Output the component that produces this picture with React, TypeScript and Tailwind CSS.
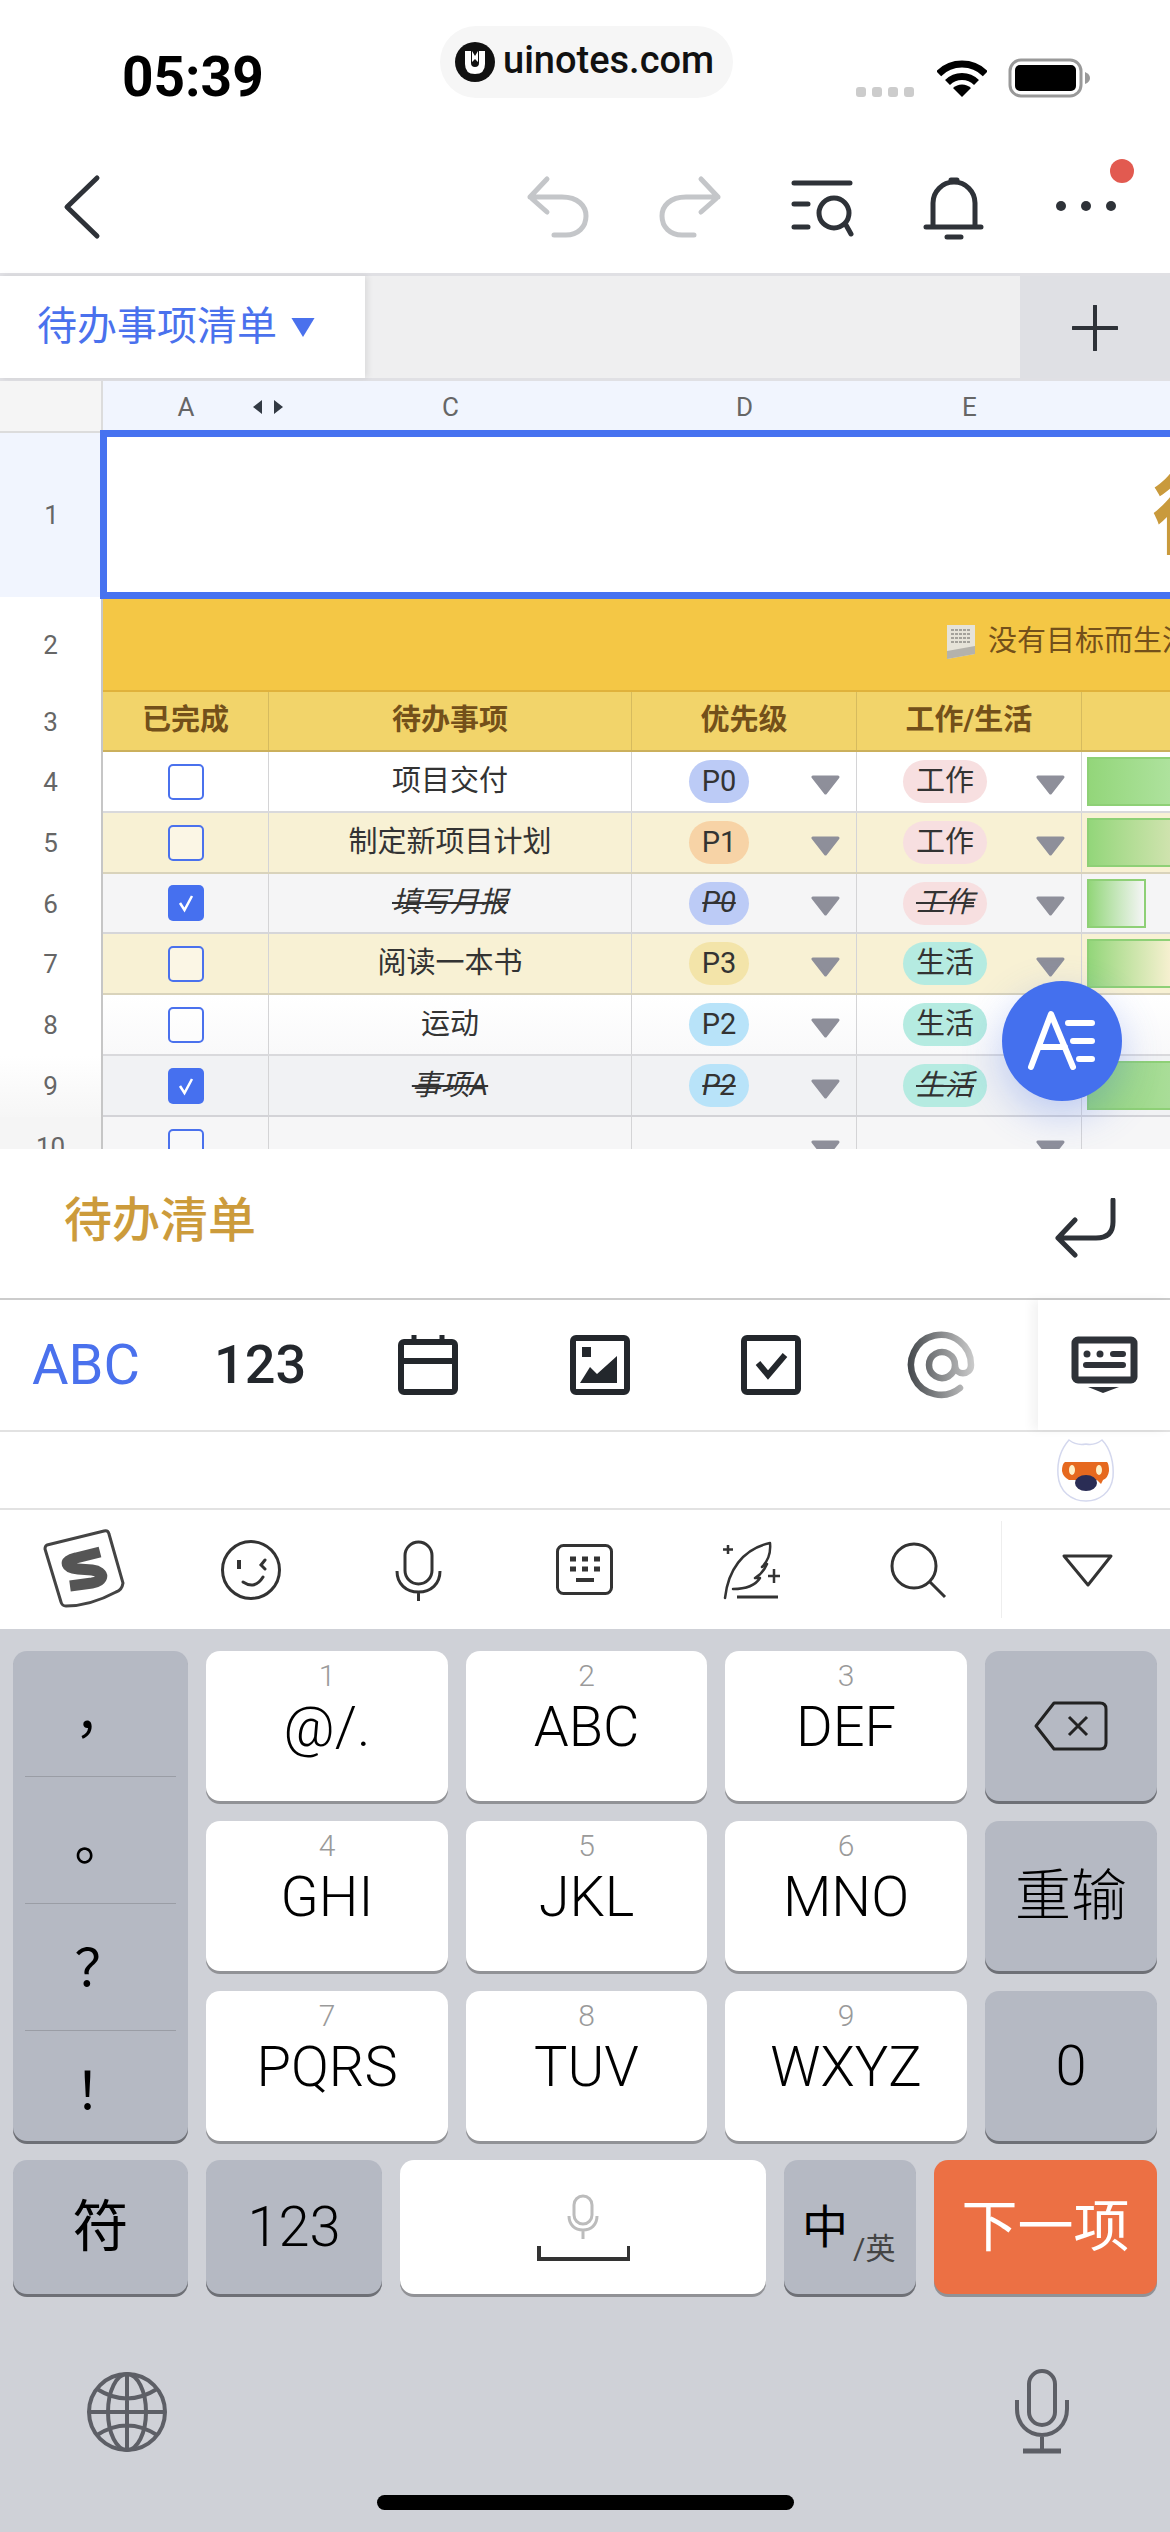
import type { ReactNode } from "react";

const rows = [
  { n: 4, labelBg: "bg-white", rowBg: "bg-white", line: "border-[#d9d9dc]", title: "项目交付", done: false, p: "P0", pBg: "bg-[#bccbf6]", tag: "工作", tagBg: "bg-[#f7dfe0]", bar: "w-full from-[#93d67a] to-[#aee29d]" },
  { n: 5, labelBg: "bg-white", rowBg: "bg-[#f8f1d4]", line: "border-[#d9d3bb]", title: "制定新项目计划", done: false, p: "P1", pBg: "bg-[#f7d3a6]", tag: "工作", tagBg: "bg-[#f7dfe0]", bar: "w-full from-[#93d67a] to-[#cfe3ae]" },
  { n: 6, labelBg: "bg-white", rowBg: "bg-[#f5f5f6]", line: "border-[#d6d6d9]", title: "填写月报", done: true, p: "P0", pBg: "bg-[#bccbf6]", tag: "工作", tagBg: "bg-[#f7dfe0]", bar: "w-[59px] border-r-2 from-[#93d67a] to-[#f5f5f6]" },
  { n: 7, labelBg: "bg-white", rowBg: "bg-[#f8f1d4]", line: "border-[#d9d3bb]", title: "阅读一本书", done: false, p: "P3", pBg: "bg-[#f3e4a9]", tag: "生活", tagBg: "bg-[#b5ebe1]", bar: "w-full from-[#93d67a] to-[#f6f0d0]" },
  { n: 8, labelBg: "bg-white", rowBg: "bg-linear-to-b from-white to-[#f9f9fa]", line: "border-[#d9d9dc]", title: "运动", done: false, p: "P2", pBg: "bg-[#b8e3f9]", tag: "生活", tagBg: "bg-[#b5ebe1]", bar: "" },
  { n: 9, labelBg: "bg-linear-to-b from-white to-[#f6f6f6]", rowBg: "bg-[#f1f2f4]", line: "border-[#d3d3d7]", title: "事项A", done: true, p: "P2", pBg: "bg-[#b8e3f9]", tag: "生活", tagBg: "bg-[#b5ebe1]", bar: "w-full from-[#93d67a] to-[#a9dd98]" },
  { n: 10, labelBg: "bg-[#f5f5f5]", rowBg: "bg-[#f6f6f7]", line: "border-transparent", title: "", done: false, p: "", pBg: "", tag: "", tagBg: "", bar: "" },
];

const Svg = ({ box, w, h, className, children }: { box: string; w: number; h: number; className?: string; children: ReactNode }) => (
  <svg viewBox={box} width={w} height={h} fill="none" className={className}>
    {children}
  </svg>
);

const Undo = ({ className }: { className?: string }) => (
  <Svg box="526 174 64 66" w={64} h={66} className={className}>
    <path d="M547 179 L530 197 L547 212 M530 197 H562 C578 197 586 206 586 216 C586 227 578 235 566 235 H554" stroke="#c4c6c9" strokeWidth={5} strokeLinecap="round" strokeLinejoin="round" />
  </Svg>
);

const Triangle = () => (
  <svg viewBox="0 0 29 20" width={29} height={20} className="shrink-0">
    <path d="M2 2 H27 L14.5 18 Z" fill="#8e8f9a" stroke="#8e8f9a" strokeWidth={3} strokeLinejoin="round" />
  </svg>
);

function Key({ num, label, tone = "white" }: { num?: string; label?: ReactNode; tone?: "white" | "side" }) {
  const toneClass = tone === "white" ? "bg-white shadow-[0_3px_0_#919296]" : "bg-[#b5b9c3] shadow-[0_3px_0_#6e7076]";
  return (
    <div className={`${toneClass} rounded-[14px] flex flex-col items-center text-black`}>
      {num ? (
        <>
          <span className="mt-[10px] text-[30px] leading-[30px] font-light text-[#9a9a9a]">{num}</span>
          <span className="mt-[8px] text-[56px] leading-[56px] font-light">{label}</span>
        </>
      ) : (
        <div className="flex-1 flex items-center justify-center text-[56px] font-light leading-none">{label}</div>
      )}
    </div>
  );
}

export default function App() {
  return (
    <div className="relative w-[1170px] h-[2532px] overflow-hidden bg-white flex flex-col font-[Roboto,'Noto_Sans_CJK_SC',sans-serif]">
      {/* status bar */}
      <div className="h-[130px] shrink-0 flex items-start pl-[122px]">
        <div className="w-[318px] mt-[47px] text-[55px] leading-[60px] font-bold text-black">05:39</div>
        <div className="w-[293px] h-[72px] mt-[26px] rounded-[36px] bg-[#f6f6f6] flex items-center pl-[15px] gap-[8px]">
          <svg viewBox="0 0 40 40" width={40} height={40} className="shrink-0">
            <circle cx={20} cy={20} r={20} fill="#111" />
            <path d="M10 9 H16 V21 Q16 25 20 25 Q24 25 24 21 V9 H30 V22 Q30 32 20 32 Q10 32 10 22 Z" fill="#fff" />
            <path d="M17 9 L20 14 L23 9 V20 L20 17 L17 20 Z" fill="#fff" />
          </svg>
          <span className="text-[38px] leading-none font-medium text-[#111] -mt-[5px]">uinotes.com</span>
        </div>
        <div className="ml-[123px] mt-[58px] flex items-end">
          <div className="flex gap-[6px] mb-[1px]">
            <span className="w-[10px] h-[10px] rounded-[3px] bg-[#cccccc]" />
            <span className="w-[10px] h-[10px] rounded-[3px] bg-[#cccccc]" />
            <span className="w-[10px] h-[10px] rounded-[3px] bg-[#cccccc]" />
            <span className="w-[10px] h-[10px] rounded-[3px] bg-[#cccccc]" />
          </div>
          <svg viewBox="0 0 50 37" width={50} height={37} className="ml-[23px] mb-[1px]">
            <path d="M25 37 L16 28 A13 13 0 0 1 34 28 Z" fill="#000" />
            <path d="M10.5 22.5 A20.5 20.5 0 0 1 39.5 22.5" stroke="#000" strokeWidth={7} fill="none" />
            <path d="M1.7 13.7 A33 33 0 0 1 48.3 13.7" stroke="#000" strokeWidth={7} fill="none" />
          </svg>
          <svg viewBox="0 0 84 40" width={84} height={40} className="ml-[21px]">
            <rect x={2} y={2} width={71} height={36} rx={11} stroke="#999" strokeWidth={3} fill="none" />
            <rect x={7} y={7} width={61} height={26} rx={5} fill="#000" />
            <path d="M77 14 Q82 16 82 20 Q82 24 77 26 Z" fill="#999" />
          </svg>
        </div>
      </div>

      {/* nav */}
      <div className="relative h-[143px] shrink-0 flex items-start pt-[44px] pl-[62px]">
        <Svg box="62 174 42 66" w={42} h={66}>
          <path d="M97 178 L67 207 L97 236" stroke="#2e3238" strokeWidth={5} strokeLinecap="round" strokeLinejoin="round" />
        </Svg>
        <Undo className="ml-[422px]" />
        <Undo className="ml-[68px] -scale-x-100" />
        <Svg box="788 174 68 66" w={68} h={66} className="ml-[66px]">
          <path d="M794 183 H850 M794 204 H808 M794 227 H808 M846 225 L851 234" stroke="#2e3238" strokeWidth={5} strokeLinecap="round" />
          <circle cx={834} cy={213} r={15} stroke="#2e3238" strokeWidth={5} />
        </Svg>
        <Svg box="920 174 68 68" w={68} h={68} className="ml-[64px]">
          <path d="M933 227 V203 A21 21 0 0 1 975 203 V227 M926 227 H981 M947 237 H961 M951 180 H957" stroke="#2e3238" strokeWidth={5} strokeLinecap="round" />
        </Svg>
        <Svg box="1052 196 68 20" w={68} h={20} className="ml-[64px] mt-[22px]">
          <circle cx={1061} cy={206} r={5} fill="#2e3238" />
          <circle cx={1086} cy={206} r={5} fill="#2e3238" />
          <circle cx={1111} cy={206} r={5} fill="#2e3238" />
        </Svg>
        <span className="absolute left-[1110px] top-[29px] w-[24px] h-[24px] rounded-full bg-[#e25a50]" />
      </div>

      {/* sheet tabs */}
      <div className="h-[108px] shrink-0 flex border-y-[3px] border-[#e0e0e4] bg-[#efeff0]">
        <div className="w-[365px] bg-white shadow-[3px_0_6px_rgba(0,0,0,0.08)] flex items-center pl-[37px] text-[40px] leading-none text-[#4a71ed]">
          待办事项清单
          <svg viewBox="0 0 24 20" width={26} height={21} className="ml-[13px]">
            <path d="M1 1 H23 L12 19 Z" fill="#4a71ed" />
          </svg>
        </div>
        <div className="ml-auto w-[150px] bg-[#dfe0e4] flex items-center justify-center">
          <svg viewBox="0 0 46 46" width={46} height={46} className="mt-[2px]">
            <path d="M23 1 V45 M1 23 H45" stroke="#2e3238" strokeWidth={4} strokeLinecap="round" />
          </svg>
        </div>
      </div>

      {/* sheet */}
      <div className="relative h-[768px] shrink-0 overflow-hidden bg-white text-[#333] text-[29px]">
        <div className="flex h-[52px] text-[26px] text-[#666] bg-[#f1f5fe]">
          <div className="w-[103px] bg-[#f5f5f5] border-r-2 border-b-2 border-[#dcdcdc]" />
          <div className="w-[166px] flex items-center justify-center">A</div>
          <div className="relative w-[363px] flex items-center justify-center">
            C
            <svg viewBox="0 0 30 14" width={30} height={14} className="absolute left-[-16px] top-[19px]">
              <path d="M9 0 V14 L0 7 Z M21 0 V14 L30 7 Z" fill="#333a44" />
            </svg>
          </div>
          <div className="w-[225px] flex items-center justify-center">D</div>
          <div className="w-[225px] flex items-center justify-center">E</div>
        </div>

        <div className="relative flex h-[166px]">
          <div className="w-[103px] h-[164px] bg-[#f1f5fe] flex items-center justify-center text-[26px] text-[#666]">1</div>
          <div className="flex-1 flex items-center pl-[1049px] overflow-hidden">
            <span className="shrink-0 text-[90px] leading-none font-bold text-[#c99a3c]">待</span>
          </div>
          <div className="absolute left-[100px] right-0 top-[-3px] bottom-0 border-[7px] border-r-0 border-[#4672f0]" />
        </div>

        <div className="flex h-[93px]">
          <div className="w-[103px] flex items-center justify-center text-[26px] text-[#666] border-r-2 border-[#c6c6c6]">2</div>
          <div className="flex-1 bg-[#f4c745] border-b-2 border-[#e0b23c] flex items-center pl-[841px] pb-[6px] overflow-hidden text-[#73501a] text-[29px] whitespace-nowrap">
            <svg viewBox="0 0 32 36" width={32} height={36} className="shrink-0 mr-[12px]">
              <path d="M3 1 H31 V30 L3 35 Z" fill="#e6e3d8" />
              <path d="M3 27 L31 22 V30 L3 35 Z" fill="#b4b2ab" />
              <path d="M7 6 H27 M7 10 H27 M7 14 H27 M7 18 H27" stroke="#8f8d86" strokeWidth={1.5} strokeDasharray="3 1" />
            </svg>
            没有目标而生活
          </div>
        </div>

        <div className="flex h-[60px]">
          <div className="w-[103px] flex items-center justify-center text-[26px] text-[#666] border-r-2 border-[#c6c6c6]">3</div>
          <div className="flex flex-1 bg-[#f2d46a] border-b-2 border-[#cbb05c] font-bold text-[#73501a]">
            <div className="w-[166px] flex items-center justify-center border-r border-[#d6bb5e]">已完成</div>
            <div className="w-[363px] flex items-center justify-center border-r border-[#d6bb5e]">待办事项</div>
            <div className="w-[225px] flex items-center justify-center border-r border-[#d6bb5e]">优先级</div>
            <div className="w-[225px] flex items-center justify-center border-r border-[#d6bb5e]">工作/生活</div>
          </div>
        </div>

        {rows.map((r) => {
          const mark = r.done ? "italic line-through" : "";
          return (
            <div key={r.n} className={`flex ${r.n === 6 ? "h-[60px]" : "h-[61px]"}`}>
              <div className={`w-[103px] flex items-center justify-center text-[26px] text-[#666] border-r-2 border-[#c6c6c6] ${r.labelBg}`}>{r.n}</div>
              <div className={`flex flex-1 border-b-2 ${r.rowBg} ${r.line}`}>
                <div className="w-[166px] flex items-center justify-center border-r border-[#d4d4d6]">
                  {r.done ? (
                    <svg viewBox="0 0 36 36" width={36} height={36}>
                      <rect width={36} height={36} rx={5} fill="#4670ef" />
                      <path d="M12 18 L16.500 25 L24 11" stroke="#fff" strokeWidth={2.5} fill="none" />
                    </svg>
                  ) : (
                    <span className="w-[36px] h-[36px] rounded-[5px] border-2 border-[#4a71ed] bg-white/40" />
                  )}
                </div>
                <div className={`w-[363px] flex items-center justify-center border-r border-[#d4d4d6] ${mark}`}>{r.title}</div>
                <div className="w-[225px] flex items-center pl-[57px] pr-[16px] border-r border-[#d4d4d6]">
                  {r.p && <span className={`w-[60px] h-[43px] rounded-full flex items-center justify-center ${r.pBg} ${mark}`}>{r.p}</span>}
                  <span className="ml-auto mt-[6px]">
                    <Triangle />
                  </span>
                </div>
                <div className="w-[225px] flex items-center pl-[46px] pr-[16px] border-r border-[#d4d4d6]">
                  {r.tag && <span className={`w-[84px] h-[43px] rounded-full flex items-center justify-center ${r.tagBg} ${mark}`}>{r.tag}</span>}
                  <span className="ml-auto mt-[6px]">
                    <Triangle />
                  </span>
                </div>
                <div className="flex-1 pl-[5px] pt-[5px] overflow-hidden">
                  {r.bar && <div className={`h-[49px] border-y-2 border-l-2 border-[#8ed076] bg-linear-to-r ${r.bar}`} />}
                </div>
              </div>
            </div>
          );
        })}

        <div className="absolute left-[1002px] top-[600px] w-[120px] h-[120px] rounded-full bg-[#4470ee] shadow-[0_14px_40px_rgba(68,112,238,0.3)]">
          <svg viewBox="0 0 120 120" width={120} height={120}>
            <path d="M29 86 L49 33 L71 86 M37 66 H63 M66 42 H90 M71 60 H90 M77 78 H90" stroke="#fff" strokeWidth={6} strokeLinecap="round" strokeLinejoin="round" fill="none" />
          </svg>
        </div>
      </div>

      {/* editor line */}
      <div className="h-[151px] shrink-0 border-b-2 border-[#cccccc] flex items-center pl-[64px] pr-[50px]">
        <span className="text-[48px] leading-none font-medium text-[#cc9b3b] mb-[6px]">待办清单</span>
        <Svg box="1054 1198 66 60" w={66} h={60} className="ml-auto mt-[9px]">
          <path d="M1113 1200 V1222 Q1113 1238 1096 1238 H1059 M1075 1220 L1058 1238 L1075 1255" stroke="#2e3238" strokeWidth={5} strokeLinecap="round" strokeLinejoin="round" />
        </Svg>
      </div>

      {/* format toolbar */}
      <div className="relative h-[132px] shrink-0 border-b-2 border-[#e2e2e2] flex items-center pl-[32px]">
        <span className="w-[182px] text-[56px] leading-none text-[#4a71ed]">ABC</span>
        <span className="w-[184px] text-[54px] leading-none font-medium text-[#23272c]">123</span>
        <Svg box="0 0 60 60" w={60} h={60}>
          <rect x={3} y={7} width={54} height={50} rx={3} stroke="#23272c" strokeWidth={6} />
          <path d="M3 26 H57" stroke="#23272c" strokeWidth={6} />
          <path d="M16 0 V8 M44 0 V8" stroke="#23272c" strokeWidth={5} />
        </Svg>
        <Svg box="0 0 60 60" w={60} h={60} className="ml-[112px]">
          <rect x={3} y={3} width={54} height={54} rx={3} stroke="#23272c" strokeWidth={6} />
          <rect x={12} y={12} width={9} height={10} fill="#23272c" />
          <path d="M10 48 L20 32 L27 39 L47 21 V48 Z" fill="#23272c" />
        </Svg>
        <Svg box="0 0 60 60" w={60} h={60} className="ml-[111px]">
          <rect x={3} y={3} width={54} height={54} rx={3} stroke="#23272c" strokeWidth={6} />
          <path d="M17 28 L27 40 L44 20" stroke="#23272c" strokeWidth={6} />
        </Svg>
        <Svg box="0 0 70 70" w={70} h={70} className="ml-[105px]">
          <defs>
            <linearGradient id="at" x1="0" y1="0" x2="70" y2="0" gradientUnits="userSpaceOnUse">
              <stop offset="0" stopColor="#404448" />
              <stop offset="1" stopColor="#cfcfcf" />
            </linearGradient>
          </defs>
          <path d="M54 58 A30 30 0 1 1 65 35 C65 46 49 46 49 35 A13 13 0 1 0 49 35.1" stroke="url(#at)" strokeWidth={6.5} strokeLinecap="round" />
        </Svg>
        <div className="absolute right-0 top-0 bottom-0 w-[132px] bg-white shadow-[-6px_0_10px_rgba(0,0,0,0.05)] flex justify-center pl-[2px] pt-[35px]">
          <Svg box="1070 1333 70 60" w={70} h={60}>
            <rect x={1075} y={1338} width={59} height={40} rx={3} stroke="#2e3238" strokeWidth={7} />
            <circle cx={1087} cy={1352} r={3.5} fill="#2e3238" />
            <circle cx={1100} cy={1352} r={3.5} fill="#2e3238" />
            <path d="M1113 1352 H1123 M1086 1363 H1123" stroke="#2e3238" strokeWidth={6} strokeLinecap="round" />
            <path d="M1088 1385 H1119 L1103 1391 Z" fill="#2e3238" />
          </Svg>
        </div>
      </div>

      {/* candidate strip */}
      <div className="h-[78px] shrink-0 border-b-2 border-[#e2e2e2] flex items-center justify-end pr-[53px]">
        <Svg box="1056 1438 62 66" w={62} h={66}>
          <path d="M1070 1441 Q1078 1447 1087 1445 Q1095 1447 1103 1441 C1112 1450 1115 1465 1114 1478 C1112 1494 1100 1502 1087 1502 C1072 1502 1060 1492 1059 1476 C1058 1462 1062 1450 1070 1441 Z" fill="#fff" stroke="#d4d8ee" strokeWidth={1.5} />
          <path d="M1066 1463 H1108 Q1110 1465 1110 1472 Q1109 1479 1104 1481 L1102 1485 L1098 1481 H1070 Q1064 1478 1063 1472 Q1063 1465 1066 1463 Z" fill="#e6691f" />
          <ellipse cx={1073} cy={1471} rx={3} ry={5} fill="#fff1c9" />
          <ellipse cx={1100} cy={1471} rx={3} ry={5} fill="#fff1c9" />
          <ellipse cx={1087} cy={1484} rx={11} ry={8} fill="#2a2d55" />
        </Svg>
      </div>

      {/* input method bar */}
      <div className="relative h-[119px] shrink-0 flex items-center pl-[40px]">
        <Svg box="40 1525 90 90" w={90} h={90}>
          <path d="M47 1545 L104 1531 Q108 1530 109 1534 L123 1583 Q122 1590 116 1592 Q90 1606 66 1606 Q62 1606 61 1602 L45 1549 Q45 1546 47 1545 Z" stroke="#444" strokeWidth={3} />
          <path d="M100 1552 L76 1558 C62 1561 66 1568 78 1569 L92 1570 C106 1572 104 1581 92 1583 L70 1586" stroke="#555" strokeWidth={11} />
        </Svg>
        <Svg box="218 1535 66 66" w={66} h={66} className="ml-[88px]">
          <circle cx={251} cy={1568} r={28.5} stroke="#333" strokeWidth={3} />
          <path d="M239 1558 V1567" stroke="#333" strokeWidth={4} />
          <path d="M265 1558 L261 1563 L265 1567 M243 1580 Q255 1588 263 1575" stroke="#333" strokeWidth={3} strokeLinecap="round" />
        </Svg>
        <Svg box="392 1536 52 64" w={52} h={64} className="ml-[108px]">
          <rect x={405} y={1540} width={27} height={42} rx={13.5} stroke="#333" strokeWidth={3} />
          <path d="M397 1569 C397 1582 406 1590 418.500 1590 C431 1590 440 1582 440 1569 M418.500 1590 V1599" stroke="#333" strokeWidth={3} />
        </Svg>
        <Svg box="554 1541 62 56" w={62} h={56} className="ml-[110px]">
          <rect x={557.500} y={1544.500} width={54} height={48} rx={6} stroke="#333" strokeWidth={3} />
          <path d="M570 1558 H576 M582 1558 H588 M594 1558 H600 M570 1568 H576 M582 1568 H588 M594 1568 H600" stroke="#333" strokeWidth={5} />
          <path d="M576 1579 H594" stroke="#333" strokeWidth={4} />
        </Svg>
        <Svg box="720 1538 62 62" w={62} h={62} className="ml-[104px]">
          <path d="M725 1597 C728 1570 742 1548 770 1542 C771 1552 768 1560 762 1566 L767 1563 C764 1570 760 1574 755 1577 L760 1577 C755 1585 745 1588 733 1588" stroke="#333" strokeWidth={2.5} strokeLinecap="round" strokeLinejoin="round" />
          <path d="M737 1596 H778" stroke="#333" strokeWidth={3} />
          <path d="M728 1544 V1553 M723 1548.500 H733 M774 1568 V1582 M768 1575 H780" stroke="#333" strokeWidth={2.5} />
        </Svg>
        <Svg box="888 1538 60 60" w={60} h={60} className="ml-[106px]">
          <circle cx={914} cy={1564} r={22} stroke="#333" strokeWidth={3} />
          <path d="M930 1580 L945 1595" stroke="#333" strokeWidth={3} />
        </Svg>
        <span className="ml-[53px] w-px h-[97px] bg-[#eeeeee]" />
        <Svg box="1060 1552 56 36" w={56} h={36} className="ml-[58px]">
          <path d="M1064 1556 H1111 L1088 1585 Z" stroke="#333" strokeWidth={3} strokeLinejoin="round" />
        </Svg>
      </div>

      {/* keyboard */}
      <div className="flex-1 bg-[#cfd1d7] pt-[22px] px-[13px]">
        <div className="grid grid-cols-[175px_242px_241px_242px_172px] gap-x-[18px] gap-y-[20px] auto-rows-[150px]">
          <div className="row-span-3 bg-[#b5b9c3] shadow-[0_3px_0_#6e7076] rounded-[14px] flex flex-col items-center text-[52px] leading-none text-black">
            <div className="w-[151px] h-[126px] pt-[5px] border-b border-[#9a9da5] flex items-center justify-center">，</div>
            <div className="w-[151px] h-[127px] pt-[6px] border-b border-[#9a9da5] flex items-center justify-center">。</div>
            <div className="w-[151px] h-[127px] pt-[5px] border-b border-[#9a9da5] flex items-center justify-center">？</div>
            <div className="w-[151px] flex-1 pt-[13px] flex items-center justify-center">！</div>
          </div>
          <Key num="1" label="@/." />
          <Key num="2" label="ABC" />
          <Key num="3" label="DEF" />
          <Key
            tone="side"
            label={
              <svg viewBox="0 0 74 50" width={74} height={50}>
                <path d="M20 2 H66 Q72 2 72 8 V42 Q72 48 66 48 H20 L2 25 Z" stroke="#222" strokeWidth={3} fill="none" strokeLinejoin="round" />
                <path d="M35 16 L53 34 M53 16 L35 34" stroke="#222" strokeWidth={3} />
              </svg>
            }
          />
          <Key num="4" label="GHI" />
          <Key num="5" label="JKL" />
          <Key num="6" label="MNO" />
          <Key tone="side" label="重输" />
          <Key num="7" label="PQRS" />
          <Key num="8" label="TUV" />
          <Key num="9" label="WXYZ" />
          <Key tone="side" label="0" />
        </div>

        <div className="mt-[19px] h-[134px] flex gap-[18px] text-black">
          <div className="w-[175px] rounded-[14px] bg-[#b5b9c3] shadow-[0_3px_0_#6e7076] flex items-center justify-center text-[56px] leading-none">符</div>
          <div className="w-[176px] rounded-[14px] bg-[#b5b9c3] shadow-[0_3px_0_#6e7076] flex items-center justify-center text-[56px] leading-none font-light">123</div>
          <div className="w-[366px] rounded-[14px] bg-white shadow-[0_3px_0_#919296] flex flex-col items-center justify-center gap-[5px]">
            <Svg box="565 2195 34 46" w={34} h={46}>
              <rect x={573} y={2198} width={18} height={28} rx={9} stroke="#bcbcbc" strokeWidth={3} />
              <path d="M568 2218 C568 2227 574 2232 582 2232 C590 2232 596 2227 596 2218 M582 2232 V2241" stroke="#bcbcbc" strokeWidth={3} />
            </Svg>
            <Svg box="535 2244 94 17" w={94} h={17}>
              <path d="M538 2246 V2259 H628 V2246" stroke="#333" strokeWidth={4} />
            </Svg>
          </div>
          <div className="w-[132px] rounded-[14px] bg-[#b5b9c3] shadow-[0_3px_0_#6e7076] flex items-end pl-[18px] pb-[30px]">
            <span className="text-[46px] leading-none mb-[14px]">中</span>
            <span className="text-[30px] leading-none text-[#444] ml-[5px]">/英</span>
          </div>
          <div className="w-[223px] rounded-[14px] bg-[#ec7044] shadow-[0_3px_0_#919296] flex items-center justify-center text-[56px] leading-none text-white">下一项</div>
        </div>

        <div className="mt-[73px] flex items-start pl-[73px] pr-[85px] justify-between">
          <Svg box="86 2370 82 84" w={82} h={84} className="mt-[3px]">
            <circle cx={127} cy={2412} r={38} stroke="#5d5f66" strokeWidth={4} />
            <ellipse cx={127} cy={2412} rx={19} ry={38} stroke="#5d5f66" strokeWidth={4} />
            <path d="M127 2374 V2450 M89 2412 H165 M97 2389 Q127 2408 157 2389 M97 2435 Q127 2416 157 2435" stroke="#5d5f66" strokeWidth={4} />
          </Svg>
          <Svg box="1012 2365 60 88" w={60} h={88}>
            <rect x={1029} y={2369} width={26} height={54} rx={13} stroke="#5d5f66" strokeWidth={4} />
            <path d="M1017 2398 V2407 C1017 2422 1028 2433 1042 2433 C1056 2433 1067 2422 1067 2407 V2398 M1042 2433 V2447" stroke="#5d5f66" strokeWidth={4} />
            <path d="M1023 2449 H1061" stroke="#5d5f66" strokeWidth={5} />
          </Svg>
        </div>

        <div className="mt-[40px] ml-[364px] w-[417px] h-[15px] rounded-full bg-black" />
      </div>
    </div>
  );
}
